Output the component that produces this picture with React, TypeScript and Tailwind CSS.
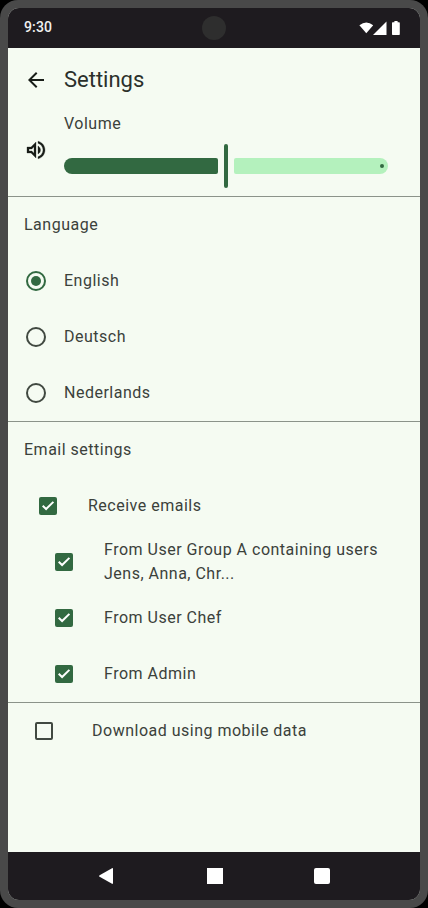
import type { ReactNode } from "react";

function Radio({ label, checked = false }: { label: string; checked?: boolean }) {
  return (
    <div className="flex h-14 items-center pl-[18px]">
      <span
        className={`flex size-5 shrink-0 items-center justify-center rounded-full border-2 ${
          checked ? "border-[#326941]" : "border-[#414941]"
        }`}
      >
        {checked && <span className="size-2.5 rounded-full bg-[#326941]" />}
      </span>
      <span className="ml-[18px]">{label}</span>
    </div>
  );
}

function Checkbox({ checked = false }: { checked?: boolean }) {
  if (!checked) {
    return <span className="size-[18px] shrink-0 rounded-[2px] border-2 border-[#414941]" />;
  }
  return (
    <span className="flex size-[18px] shrink-0 items-center justify-center rounded-[2px] bg-[#326941]">
      <svg width="18" height="18" viewBox="0 0 18 18" fill="none" stroke="#fff" strokeWidth="2">
        <path d="M3.7 8.7 7.1 12 14.4 4.9" />
      </svg>
    </span>
  );
}

function CheckRow({ indent, gap, checked, children }: { indent: string; gap: string; checked?: boolean; children: ReactNode }) {
  return (
    <div className={`flex h-14 items-center ${indent} ${gap}`}>
      <Checkbox checked={checked} />
      <span>{children}</span>
    </div>
  );
}

function Divider() {
  return <div className="h-px bg-[#8b938a]" />;
}

function SectionTitle({ children }: { children: ReactNode }) {
  return <h2 className="flex h-14 items-center pl-4">{children}</h2>;
}

export default function App() {
  return (
    <div className="h-[908px] w-[428px] bg-black font-['Roboto',sans-serif]">
      <div className="h-full rounded-[18px] bg-[#494949] p-2">
        <div className="flex h-full flex-col overflow-hidden rounded-[11px] bg-[#f5fbf2]">
          <header className="grid h-10 shrink-0 grid-cols-3 items-center bg-[#1e1b1f] px-4 text-white">
            <span className="pb-0.5 text-sm font-medium tracking-[0.14px] text-[#f0f0f0]">9:30</span>
            <span className="size-6 justify-self-center rounded-full bg-[#2e2e2e]" />
            <svg className="-mr-px justify-self-end" width="46" height="16" viewBox="0 0 46 16" fill="#fff">
              <path d="M.4 5.2Q7.3-.2 14.2 5.2L7.3 13.2Z" />
              <path d="M14 15H27.5V1.4Z" />
              <path d="M35.4 1h3.2v1.2h1.5q.7 0 .7.7v11.4q0 .7-.7.7h-6.4q-.7 0-.7-.7V2.9q0-.7.7-.7h1.7z" />
            </svg>
          </header>

          <main className="flex-1 text-base leading-6 tracking-[0.5px] text-[#3b413b]">
            <div className="flex h-16 items-center gap-4 pl-4">
              <svg width="24" height="24" viewBox="0 0 24 24" fill="#181d18">
                <path d="M20 11H7.83l5.59-5.59L12 4l-8 8 8 8 1.41-1.41L7.83 13H20v-2z" />
              </svg>
              <h1 className="text-[22px] leading-7 tracking-normal text-[#2b302b]">Settings</h1>
            </div>

            <section className="flex h-[84px] pl-4">
              <svg className="mt-[26px] shrink-0" width="24" height="24" viewBox="0 0 24 24" fill="#181d18" stroke="#181d18" strokeWidth=".3">
                <path d="M3 9v6h4l5 5V4L7 9H3zm7-.17v6.34L7.83 13H5v-2h2.83L10 8.83zM16.5 12c0-1.77-1.02-3.29-2.5-4.03v8.05c1.48-.73 2.5-2.25 2.5-4.02zM14 3.23v2.06c2.89.86 5 3.54 5 6.71s-2.11 5.85-5 6.71v2.06c4.01-.91 7-4.49 7-8.77s-2.99-7.86-7-8.77z" />
              </svg>
              <div className="ml-4 w-[324px]">
                <div>Volume</div>
                <div className="mt-2 flex h-11 items-center gap-1.5">
                  <div className="h-4 w-[154px] rounded-l-[8px] rounded-r-[2px] bg-[#326941]" />
                  <div className="h-11 w-1 rounded-[2px] bg-[#326941]" />
                  <div className="flex h-4 flex-1 items-center justify-end rounded-l-[2px] rounded-r-[8px] bg-[#b4f1bd] pr-1">
                    <span className="size-1 rounded-full bg-[#326941]" />
                  </div>
                </div>
              </div>
            </section>
            <Divider />

            <section>
              <SectionTitle>Language</SectionTitle>
              <Radio label="English" checked />
              <Radio label="Deutsch" />
              <Radio label="Nederlands" />
            </section>
            <Divider />

            <section>
              <SectionTitle>Email settings</SectionTitle>
              <CheckRow indent="pl-[31px]" gap="gap-[31px]" checked>Receive emails</CheckRow>
              <CheckRow indent="pl-[47px]" gap="gap-[31px]" checked>
                From User Group A containing users
                <br />
                Jens, Anna, Chr...
              </CheckRow>
              <CheckRow indent="pl-[47px]" gap="gap-[31px]" checked>From User Chef</CheckRow>
              <CheckRow indent="pl-[47px]" gap="gap-[31px]" checked>From Admin</CheckRow>
            </section>
            <Divider />

            <CheckRow indent="pl-[27px]" gap="gap-[39px]">Download using mobile data</CheckRow>
          </main>

          <nav className="flex h-12 shrink-0 items-center bg-[#1e1b1f] pl-[91px]">
            <svg width="14" height="16" viewBox="0 0 14 16" fill="#fff">
              <path d="M.6 7.2 13 .2Q14-.2 14 .9V15.1Q14 16.2 13 15.8L.6 8.8Q-.5 8 .6 7.2Z" />
            </svg>
            <span className="ml-[94px] size-4 bg-white" />
            <span className="ml-[91px] size-4 rounded-[2px] bg-white" />
          </nav>
        </div>
      </div>
    </div>
  );
}
